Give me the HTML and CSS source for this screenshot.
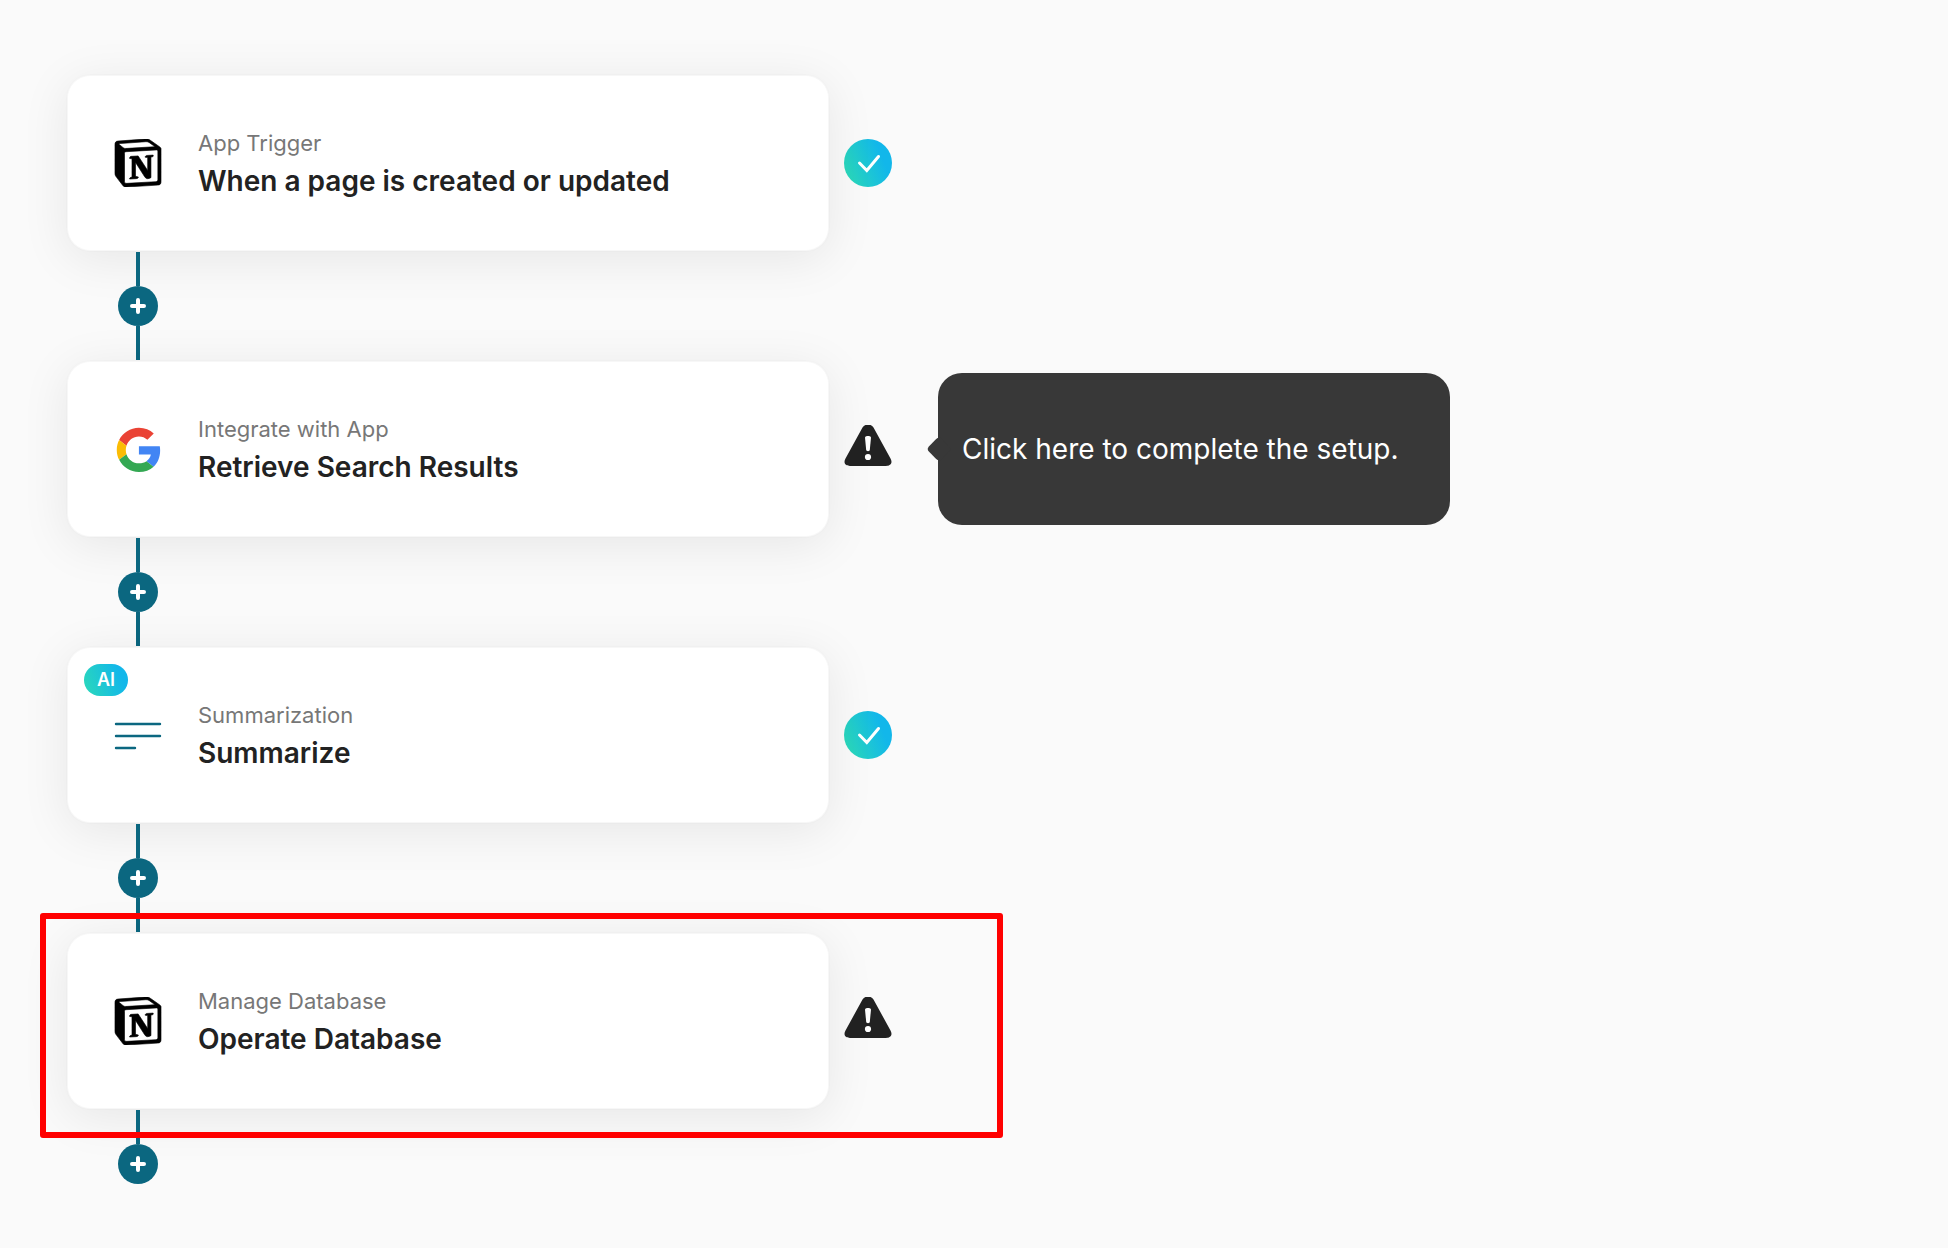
FILE: index.html
```html
<!DOCTYPE html>
<html lang="en">
<head>
  <meta charset="UTF-8" />
  <meta name="viewport" content="width=device-width, initial-scale=1.0" />
  <title>Workflow</title>
  <link rel="stylesheet" href="styles.css">
</head>
<body>

  <!-- shared icons -->
  <svg class="icon-defs" aria-hidden="true">
    <defs>
      <linearGradient id="tealBlue" x1="0" y1="0.7" x2="1" y2="0.3">
        <stop offset="0" stop-color="#2bd9b9" />
        <stop offset="0.8" stop-color="#12b7ea" />
      </linearGradient>
    </defs>
    <symbol id="notion" viewBox="0 0 24 24">
      <path fill-rule="evenodd" stroke="#000" stroke-width="0.3" d="M4.459 4.208c.746.606 1.026.56 2.428.466l13.215-.793c.28 0 .047-.28-.046-.326L17.86 1.968c-.42-.326-.981-.7-2.055-.607L3.01 2.295c-.466.046-.56.28-.374.466zm.793 3.08v13.904c0 .747.373 1.027 1.214.98l14.523-.84c.841-.046.935-.56.935-1.167V6.354c0-.606-.233-.933-.748-.887l-15.177.887c-.56.047-.747.327-.747.933zm14.337.745c.093.42 0 .84-.42.888l-.7.14v10.264c-.608.327-1.168.514-1.635.514-.748 0-.935-.234-1.495-.933l-4.577-7.186v6.952L12.21 19s0 .84-1.168.84l-3.222.186c-.093-.186 0-.653.327-.746l.84-.233V9.854L7.822 9.76c-.094-.42.14-1.026.793-1.073l3.456-.233 4.764 7.279v-6.44l-1.215-.139c-.093-.514.28-.887.747-.933zM1.936 1.035l13.31-.98c1.634-.14 2.055-.047 3.082.7l4.249 2.986c.7.513.934.653.934 1.213v16.378c0 1.026-.373 1.634-1.68 1.726l-15.458.934c-.98.047-1.448-.093-1.962-.747l-3.129-4.06c-.56-.747-.793-1.306-.793-1.96V2.667c0-.839.374-1.54 1.447-1.632z" />
    </symbol>
    <symbol id="check" viewBox="0 0 48 48">
      <circle cx="24" cy="24" r="24" fill="url(#tealBlue)" />
      <path d="M15.500 24l7.300 7.500L34.500 17.500" fill="none" stroke="#fff" stroke-width="3" stroke-linecap="round" />
    </symbol>
    <symbol id="warning" viewBox="0 0 48 48">
      <path d="M18.500 2.500C21 -1.500 27 -1.500 29.500 2.500L46.500 33.500C49 38 46.500 41 42 41H6C1.500 41 -1 38 1.500 33.500Z" fill="#222" />
      <path d="M21 12.500C21 10.500 27 10.500 27 12.500L25.800 25C25.600 26.500 22.400 26.500 22.200 25Z" fill="#fff" />
      <circle cx="24" cy="32" r="3.100" fill="#fff" />
    </symbol>
    <symbol id="plus" viewBox="0 0 16 16">
      <path d="M8 2v12M2 8h12" stroke="#fff" stroke-width="4" stroke-linecap="round" />
    </symbol>
  </svg>

  <main class="flow">

    <section class="step">
      <div class="card">
        <svg class="app-icon"><use href="#notion" /></svg>
        <div class="card-text">
          <p class="card-label">App Trigger</p>
          <h2 class="card-title">When a page is created or updated</h2>
        </div>
      </div>
      <svg class="status" role="img" aria-label="Done"><use href="#check" /></svg>
    </section>

    <div class="connector">
      <button class="add-btn" aria-label="Add step"><svg><use href="#plus" /></svg></button>
    </div>

    <section class="step">
      <div class="card">
        <svg class="app-icon" viewBox="-3 -3 52 52">
          <path fill="#EA4335" d="M24 9.500c3.540 0 6.710 1.220 9.210 3.600l6.850-6.850C35.900 2.380 30.470 0 24 0 14.620 0 6.510 5.380 2.560 13.220l7.980 6.190C12.430 13.720 17.740 9.500 24 9.500z" />
          <path fill="#4285F4" d="M46.980 24.550c0-1.570-.15-3.090-.38-4.550H24v9.020h12.940c-.58 2.960-2.260 5.480-4.780 7.180l7.730 6c4.510-4.180 7.090-10.360 7.090-17.650z" />
          <path fill="#FBBC05" d="M10.530 28.590c-.48-1.450-.76-2.990-.76-4.590s.27-3.140.76-4.590l-7.980-6.190C.92 16.460 0 20.120 0 24c0 3.880.92 7.540 2.560 10.780l7.970-6.190z" />
          <path fill="#34A853" d="M24 48c6.480 0 11.930-2.130 15.890-5.810l-7.730-6c-2.150 1.450-4.920 2.300-8.160 2.300-6.260 0-11.570-4.220-13.470-9.910l-7.980 6.190C6.510 42.620 14.620 48 24 48z" />
        </svg>
        <div class="card-text">
          <p class="card-label">Integrate with App</p>
          <h2 class="card-title">Retrieve Search Results</h2>
        </div>
      </div>
      <button class="status-btn" aria-label="Setup incomplete" aria-describedby="setupTip">
        <svg class="status"><use href="#warning" /></svg>
      </button>
      <div class="tooltip" id="setupTip" role="tooltip">Click here to complete the setup.</div>
    </section>

    <div class="connector">
      <button class="add-btn" aria-label="Add step"><svg><use href="#plus" /></svg></button>
    </div>

    <section class="step">
      <div class="card">
        <span class="ai-badge">AI</span>
        <svg class="app-icon" viewBox="0 0 48 48">
          <path d="M2 13h44M2 25h44M2 37h19" fill="none" stroke="#0b6780" stroke-width="2.400" stroke-linecap="round" />
        </svg>
        <div class="card-text">
          <p class="card-label">Summarization</p>
          <h2 class="card-title">Summarize</h2>
        </div>
      </div>
      <svg class="status" role="img" aria-label="Done"><use href="#check" /></svg>
    </section>

    <div class="connector">
      <button class="add-btn" aria-label="Add step"><svg><use href="#plus" /></svg></button>
    </div>

    <section class="step highlighted">
      <div class="card">
        <svg class="app-icon"><use href="#notion" /></svg>
        <div class="card-text">
          <p class="card-label">Manage Database</p>
          <h2 class="card-title">Operate Database</h2>
        </div>
      </div>
      <button class="status-btn" aria-label="Setup incomplete">
        <svg class="status"><use href="#warning" /></svg>
      </button>
    </section>

    <div class="connector last">
      <button class="add-btn" aria-label="Add step"><svg><use href="#plus" /></svg></button>
    </div>

  </main>

</body>
</html>
```
FILE: styles.css
```css
* {
  box-sizing: border-box;
}

body {
  margin: 0;
  font-family: Inter, "Liberation Sans", sans-serif;
  background: #fafafa;
  color: #222;
}

.icon-defs {
  position: absolute;
  width: 0;
  height: 0;
}

.flow {
  display: flex;
  flex-direction: column;
  align-items: flex-start;
  padding: 74px 66px 64px;
}

/* Steps */
.step {
  display: flex;
  align-items: center;
  gap: 14px;
  position: relative;
  width: 826px;
  max-width: 100%;
}

.card {
  position: relative;
  flex: 1;
  display: flex;
  align-items: center;
  gap: 36px;
  min-height: 178px;
  padding: 0 46px;
  background: #fff;
  background-clip: padding-box;
  border: 2px solid rgba(0, 0, 0, 0.01);
  border-radius: 24px;
  box-shadow: 0 8px 48px rgba(0, 0, 0, 0.08);
}

.app-icon {
  width: 48px;
  height: 48px;
  flex-shrink: 0;
  overflow: visible;
}

.card-label {
  margin: 0;
  font-size: 22px;
  line-height: 36px;
  color: #777;
}

.card-title {
  margin: 0;
  font-size: 28px;
  font-weight: 600;
  line-height: 40px;
}

.ai-badge {
  position: absolute;
  top: 16px;
  left: 16px;
  width: 44px;
  border-radius: 16px;
  background: linear-gradient(70deg, #2bd9b9, #12b7ea 80%);
  color: #fff;
  font-size: 18px;
  font-weight: 600;
  line-height: 32px;
  text-align: center;
}

.status {
  display: block;
  width: 48px;
  height: 48px;
  flex-shrink: 0;
}

.status-btn {
  padding: 0;
  border: none;
  background: none;
  cursor: pointer;
}

/* Tooltip */
.tooltip {
  position: absolute;
  top: 50%;
  left: calc(100% + 46px);
  transform: translateY(-50%);
  min-width: 512px;
  padding: 0 24px;
  border-radius: 24px;
  background: #383838;
  color: #fff;
  font-size: 28px;
  line-height: 152px;
  white-space: nowrap;
}

.tooltip::before {
  content: "";
  position: absolute;
  top: 50%;
  left: -8px;
  width: 18px;
  height: 18px;
  margin-top: -9px;
  border-radius: 4px;
  background: #383838;
  transform: rotate(45deg);
}

/* Connectors between steps */
.connector {
  position: relative;
  display: flex;
  flex-direction: column;
  align-items: center;
  margin-left: 52px;
}

.connector::before,
.connector::after {
  content: "";
  width: 4px;
  height: 34px;
  background: #0b6780;
}

.connector.last::after {
  display: none;
}

.add-btn {
  display: flex;
  align-items: center;
  justify-content: center;
  width: 40px;
  height: 40px;
  padding: 0;
  border: none;
  border-radius: 50%;
  background: #0b6780;
  cursor: pointer;
}

.add-btn svg {
  width: 16px;
  height: 16px;
}

/* Red frame around the current step */
.highlighted::after {
  content: "";
  position: absolute;
  z-index: 1;
  inset: -19px -111px -28px -26px;
  border: 6px solid #f00;
  border-radius: 3px;
  pointer-events: none;
}
```
